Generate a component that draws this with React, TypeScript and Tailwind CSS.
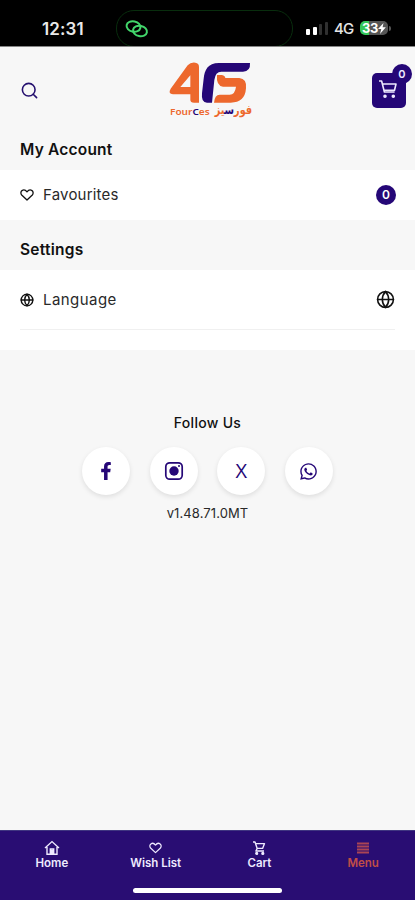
import type { ReactNode } from 'react';
import { Globe, Search } from 'lucide-react';
import { FaFacebookF, FaWhatsapp } from 'react-icons/fa';

function LinkRings() {
  return (
    <svg width="24" height="20" viewBox="0 0 24 20" fill="none" stroke="#42d66b" strokeWidth="2">
      <ellipse cx="8.5" cy="7.5" rx="7" ry="5.2" transform="rotate(12 8.5 7.5)" />
      <ellipse cx="15" cy="12" rx="7" ry="5.2" transform="rotate(12 15 12)" />
    </svg>
  );
}

function StatusBar() {
  return (
    <div className="relative h-[47px] shrink-0 overflow-hidden border-b border-[#858585] bg-black font-['Inter',sans-serif] text-white">
      <div className="absolute left-[116px] top-[10px] h-[37px] w-[177px] rounded-[18px] border border-[#082d0d] pl-[8px] pt-[8px]">
        <LinkRings />
      </div>
      <span className="absolute left-[42px] top-[18px] text-[17px] font-semibold leading-[22px] tracking-[0.1px] text-[#e9e9e9]">12:31</span>
      <div className="absolute left-[306px] top-[21px] flex h-[14px] items-end gap-[2.5px]">
        <i className="h-[6px] w-[4px] rounded-[1px] bg-white" />
        <i className="h-[8px] w-[4px] rounded-[1px] bg-white" />
        <i className="h-[11px] w-[3px] rounded-[1px] bg-[#303030]" />
        <i className="h-[13px] w-[3px] rounded-[1px] bg-[#303030]" />
      </div>
      <span className="absolute left-[334px] top-[19px] text-[15px] font-medium leading-[20px] tracking-[-0.9px] text-[#e5e5e5]">4G</span>
      <div className="absolute left-[360px] top-[21px] flex h-[14px] w-[28px] items-center rounded-[5px] bg-[linear-gradient(90deg,#34c759_33%,#555_33%)] pl-[2px]">
        <span className="text-[13px] font-bold leading-none tracking-[-0.5px]">33</span>
        <svg width="8" height="11" viewBox="0 0 8 11" fill="white">
          <path d="M5.5 0 0 6h3.3L2 11l5.8-6.7H4.6z" />
        </svg>
      </div>
      <i className="absolute left-[389px] top-[26px] h-[5px] w-[1.5px] rounded-r bg-[#555]" />
    </div>
  );
}

function Logo() {
  return (
    <svg width="120" height="80" viewBox="0 0 360 240">
      <defs>
        <linearGradient id="arabicName" gradientUnits="userSpaceOnUse" x1="194" y1="0" x2="306" y2="0">
          <stop offset="0.26" stopColor="#ed682d" />
          <stop offset="0.26" stopColor="#250777" />
          <stop offset="0.52" stopColor="#250777" />
          <stop offset="0.52" stopColor="#ed682d" />
        </linearGradient>
      </defs>
      <path fill="#ed682d" fillRule="evenodd" d="M113 46Q122 36 136 38Q147 39 147 51V158H132Q121 158 121 149V133H69Q53 131 62 116ZM121 76L91 111H121Z" />
      <path fill="#250777" d="M300 39H207C173 39 164 60 161 86L156 130Q153 158 171 158H186L193 90Q196 65 214 65H279Q302 64 300 39Z" />
      <path fill="#ed682d" d="M201 75H214Q225 76 226 84H268Q291 86 288 115Q285 158 242 158H192Q194 134 209 134H239Q255 134 258 110H219Q198 107 201 75Z" />
      <text x="60" y="194" fontSize="27" fontFamily="Noto Sans, sans-serif" fontWeight="600" fill="#ed682d" textLength="119" lengthAdjust="spacingAndGlyphs">
        Four<tspan fill="#250777">C</tspan>es
      </text>
      <text x="306" y="192" fontSize="36" fontFamily="DejaVu Sans, sans-serif" fontWeight="700" fill="url(#arabicName)" direction="rtl" textLength="112" lengthAdjust="spacingAndGlyphs">
        فورسيز
      </text>
    </svg>
  );
}

// Wide, slightly flattened heart
function HeartIcon({ className }: { className?: string }) {
  return (
    <svg className={className} viewBox="0 0 14 12" fill="none" stroke="currentColor" strokeWidth="1.3" strokeLinejoin="round">
      <path d="M7 11 1.7 6C.5 4.6.7 2.6 2 1.6 3.8.3 5.6 1 7 2.8 8.4 1 10.2.3 12 1.6c1.3 1 1.5 3 .3 4.4z" />
    </svg>
  );
}

function CartIcon({ className }: { className?: string }) {
  return (
    <svg className={className} viewBox="0 0 20 20" fill="none" stroke="currentColor" strokeWidth="1.6" strokeLinejoin="round">
      <path d="M1 2h2.6l2.8 11h10.2M4.6 5H18l-1.5 6.3H6.2" />
      <circle cx="7" cy="17.2" r="1" fill="currentColor" />
      <circle cx="15.3" cy="17.2" r="1" fill="currentColor" />
    </svg>
  );
}

function NavCartIcon() {
  return (
    <svg width="14" height="14" viewBox="0 0 14 14" fill="none" stroke="currentColor" strokeWidth="1.4" strokeLinejoin="round">
      <path d="M1 1h2l2.2 6.4L3.9 10H12M3.5 2.6h9L10.6 7.4H5.2" />
      <circle cx="4.7" cy="12.4" r=".9" fill="currentColor" />
      <circle cx="10.8" cy="12.4" r=".9" fill="currentColor" />
    </svg>
  );
}

function Header() {
  return (
    <header className="flex h-[89px] shrink-0 items-start">
      <Search className="ml-[20px] mt-[34px] size-[19px] text-[#25106f]" strokeWidth={2} />
      <div className="ml-[111px] mt-[3px]">
        <Logo />
      </div>
      <div className="relative ml-auto mr-[9px] mt-[26px] flex h-[35px] w-[34px] items-center justify-center rounded-[5px] bg-[#250777] text-[#eeeaff]">
        <CartIcon className="-ml-[2px] -mt-[3px] size-[20px]" />
        <span className="absolute -right-[6px] -top-[9px] flex size-[20px] items-center justify-center rounded-full bg-[#250777] text-[11px] font-semibold">0</span>
      </div>
    </header>
  );
}

function Social({ children }: { children: ReactNode }) {
  return (
    <div className="flex size-[48px] items-center justify-center rounded-full bg-white text-[#250777] shadow-[0_2px_5px_rgba(0,0,0,0.1)]">
      {children}
    </div>
  );
}

function NavItem({ label, icon, active }: { label: string; icon: ReactNode; active?: boolean }) {
  return (
    <div className={`flex w-[103.75px] flex-col items-center pt-[8px] ${active ? 'text-[#c04e46]' : 'text-[#eeeaff]'}`}>
      <div className="flex h-[17px] items-center">{icon}</div>
      <span className="text-[11.5px] font-semibold leading-[15px]">{label}</span>
    </div>
  );
}

export default function App() {
  return (
    <div className="flex h-[900px] w-full flex-col overflow-hidden bg-[#f7f7f7] font-['Inter',sans-serif] text-[#111]">
      <StatusBar />
      <Header />

      <h2 className="h-[34px] shrink-0 pl-[20px] pt-[2px] text-[15.5px] font-semibold leading-[24px] tracking-[0.2px]">My Account</h2>
      <div className="flex h-[50px] shrink-0 items-center bg-white pl-[20px] pr-[19px]">
        <HeartIcon className="h-[12px] w-[14px]" />
        <span className="ml-[9px] text-[15px] leading-[20px] tracking-[0.2px] text-[#292929]">Favourites</span>
        <span className="ml-auto flex size-[20px] items-center justify-center rounded-full bg-[#250777] text-[12px] font-semibold text-white">0</span>
      </div>

      <h2 className="h-[50px] shrink-0 pl-[20px] pt-[18px] text-[15.5px] font-semibold leading-[24px] tracking-[0.25px]">Settings</h2>
      <div className="h-[80px] shrink-0 bg-white px-[20px]">
        <div className="flex h-[60px] items-center border-b border-[#f0f0f0]">
          <Globe className="size-[14px]" strokeWidth={2.4} />
          <span className="ml-[9px] text-[15px] leading-[20px] tracking-[0.45px] text-[#292929]">Language</span>
          <Globe className="ml-auto size-[19px]" strokeWidth={2} />
        </div>
      </div>

      <div className="flex flex-1 flex-col items-center pt-[62px]">
        <p className="text-[14px] font-medium leading-[22px] tracking-[0.3px]">Follow Us</p>
        <div className="mt-[13px] flex gap-[19.5px]">
          <Social><FaFacebookF className="size-[18px]" /></Social>
          <Social>
            <svg width="20" height="20" viewBox="0 0 20 20" fill="none" stroke="currentColor" strokeWidth="1.7">
              <rect x="1.8" y="1.8" width="16.4" height="16.4" rx="4" />
              <circle cx="10" cy="10" r="4.7" fill="currentColor" stroke="none" />
              <circle cx="15" cy="5" r="1" fill="currentColor" stroke="none" />
            </svg>
          </Social>
          <Social><span className="font-['Open_Sans',sans-serif] text-[20px] leading-none">X</span></Social>
          <Social><FaWhatsapp className="size-[19px]" /></Social>
        </div>
        <p className="mt-[8px] text-[13px] leading-[20px] tracking-[0.1px] text-[#292929]">v1.48.71.0MT</p>
      </div>

      <nav className="relative flex h-[70px] shrink-0 border-t border-[#403681] bg-[#290d73]">
        <NavItem
          label="Home"
          icon={
            <svg width="16" height="16" viewBox="0 0 16 16" fill="none" stroke="currentColor" strokeWidth="1.4">
              <path d="M1 8 8 1.6 15 8M3 7v7.3h10V7M6.3 14V9h3.4v5" />
              <path d="M7 9.5h2V14H7z" fill="currentColor" stroke="none" />
            </svg>
          }
        />
        <NavItem label="Wish List" icon={<HeartIcon className="h-[12px] w-[13px]" />} />
        <NavItem label="Cart" icon={<NavCartIcon />} />
        <NavItem
          active
          label="Menu"
          icon={
            <svg width="12" height="12" viewBox="0 0 12 12" fill="none" stroke="#aa4555" strokeWidth="1.9">
              <path d="M0 1.5h12M0 4.5h12M0 7.5h12M0 10.5h12" />
            </svg>
          }
        />
        <span className="absolute bottom-[7px] left-[133px] h-[5px] w-[149px] rounded-full bg-white" />
      </nav>
    </div>
  );
}
